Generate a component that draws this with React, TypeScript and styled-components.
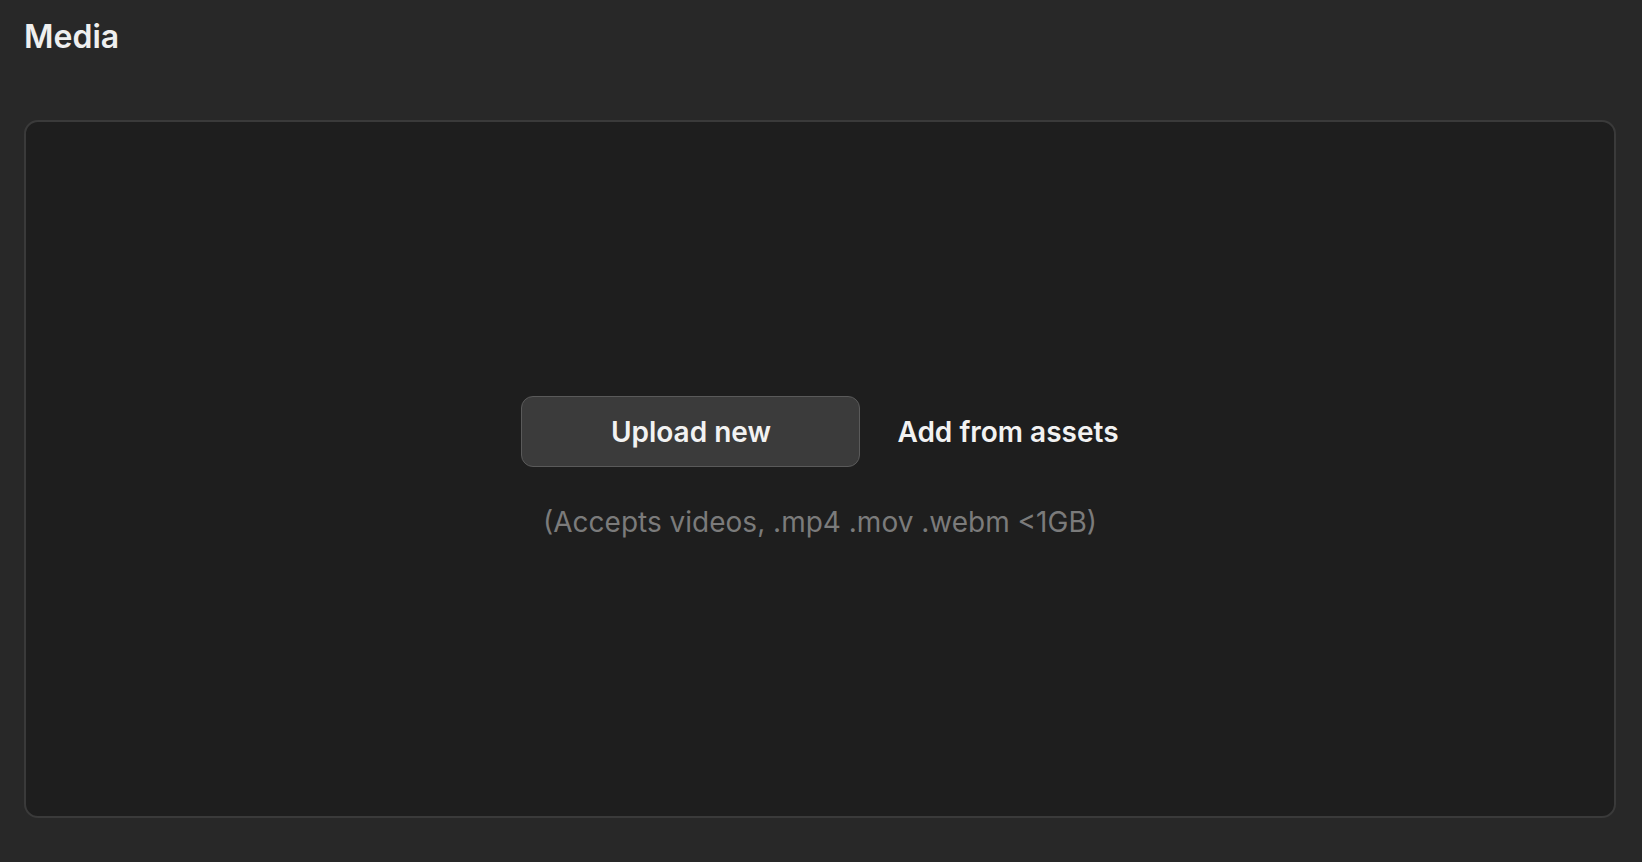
import React from "react";
import styled, { createGlobalStyle } from "styled-components";

const GlobalStyle = createGlobalStyle`
  html, body {
    margin: 0;
    padding: 0;
    background: #282828;
    font-family: Inter, "Noto Sans", "Liberation Sans", sans-serif;
    -webkit-font-smoothing: antialiased;
  }
  * {
    box-sizing: border-box;
  }
`;

const Page = styled.div`
  width: 1642px;
  height: 862px;
  padding: 18px 26px 44px 24px;
  display: flex;
  flex-direction: column;
  background: #282828;
`;

const Title = styled.h2`
  margin: 0;
  font-size: 32px;
  line-height: 38px;
  font-weight: 600;
  color: #efefef;
`;

const DropZone = styled.div`
  margin-top: 64px;
  flex: 1;
  border: 2px solid #3a3a3a;
  border-radius: 14px;
  background: #1e1e1e;
  display: flex;
  flex-direction: column;
  align-items: center;
  justify-content: center;
  gap: 39px;
  padding-bottom: 4px;
`;

const Actions = styled.div`
  display: flex;
  align-items: center;
  gap: 37px;
`;

const UploadButton = styled.button`
  width: 339px;
  height: 71px;
  border: 1px solid #5a5a5a;
  border-radius: 12px;
  background: #3b3b3b;
  color: #f2f2f2;
  font-family: inherit;
  font-size: 28px;
  font-weight: 600;
  cursor: pointer;
`;

const LinkButton = styled.button`
  border: 0;
  padding: 0;
  background: none;
  color: #f2f2f2;
  font-family: inherit;
  font-size: 28px;
  font-weight: 600;
  cursor: pointer;
`;

const Hint = styled.p`
  margin: 0;
  font-size: 28px;
  line-height: 32px;
  color: #7b7b7b;
`;

const App = () => {
  return (
    <>
      <GlobalStyle />
      <Page>
        <Title>Media</Title>
        <DropZone>
          <Actions>
            <UploadButton>Upload new</UploadButton>
            <LinkButton>Add from assets</LinkButton>
          </Actions>
          <Hint>(Accepts videos, .mp4 .mov .webm &lt;1GB)</Hint>
        </DropZone>
      </Page>
    </>
  );
};

export default App;
